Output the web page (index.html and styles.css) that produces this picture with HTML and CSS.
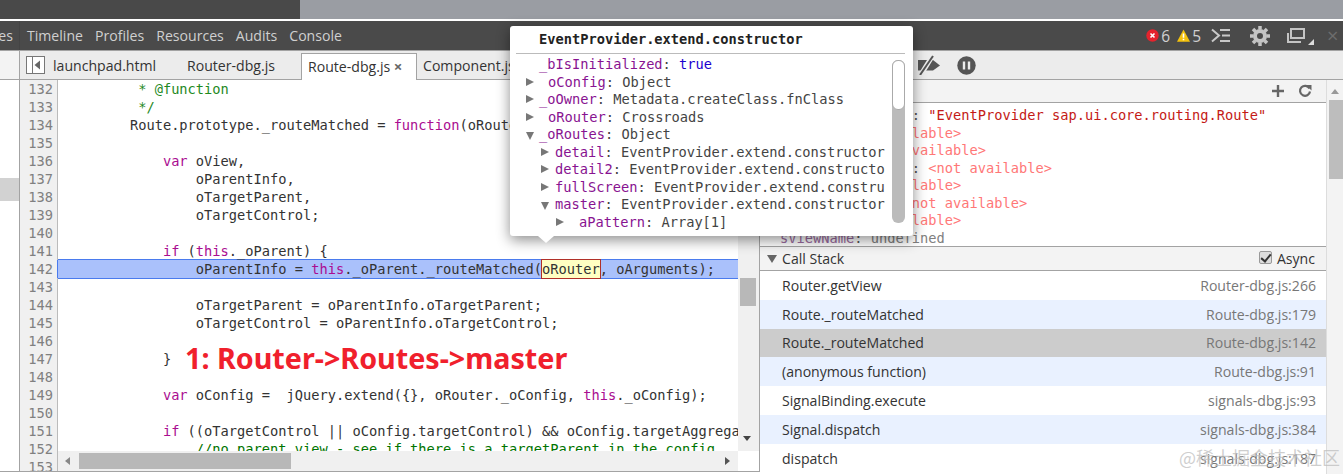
FILE: index.html
```html
<!DOCTYPE html>
<html>
<head>
  <meta charset="UTF-8">
  <title>Sources</title>
  <link rel="stylesheet" href="styles.css">
</head>
<body>
  <div class="topstrip">
    <div class="strip-dark"></div>
    <div class="strip-gray"></div>
  </div>

  <div class="toolbar">
    <div class="panel-tabs">
      <span class="cut-tab">es</span>
      <span class="panel-tab">Timeline</span>
      <span class="panel-tab">Profiles</span>
      <span class="panel-tab">Resources</span>
      <span class="panel-tab">Audits</span>
      <span class="panel-tab">Console</span>
    </div>
    <div class="status">
      <svg class="ico-err" width="13" height="13" viewBox="0 0 13 13"><circle cx="6.5" cy="6.5" r="6.2" fill="#e5232d"/><path d="M4.5 4.5l4 4M8.5 4.5l-4 4" stroke="#fff" stroke-width="1.6"/></svg>
      <span class="count">6</span>
      <svg class="ico-warn" width="13" height="13" viewBox="0 0 13 13"><path d="M6.5.5L13 12.8H0z" fill="#f4c20d"/><path d="M6.5 4.5v4.2M6.5 9.8v1.5" stroke="#fff" stroke-width="1.6"/></svg>
      <span class="count">5</span>
      <svg class="ico-drawer" width="19" height="15" viewBox="0 0 19 15" fill="none" stroke="#c8c8c8" stroke-width="2"><path d="M1 1.5L8 7.5 1 13.500"/><path d="M9 2h10M11 7.500h8M9 13h10"/></svg>
      <svg class="ico-gear" width="20" height="20" viewBox="0 0 20 20"><circle cx="10" cy="10" r="5" fill="none" stroke="#c4c4c4" stroke-width="4"/><path d="M10 0v20M0 10h20M3 3l14 14M17 3L3 17" stroke="#c4c4c4" stroke-width="3.500" stroke-dasharray="3.500 13"/></svg>
      <svg class="ico-dock" width="18" height="15" viewBox="0 0 18 15" fill="none" stroke="#c4c4c4" stroke-width="2"><rect x="4" y="1" width="13" height="9"/><path d="M1 5v9h13"/></svg>
      <svg class="ico-corner" width="6" height="6" viewBox="0 0 6 6"><path d="M6 0v6H0z" fill="#ddd"/></svg>
      <span class="close">×</span>
    </div>
  </div>

  <div class="filebar">
    <div class="filebar-side"></div>
    <svg class="ico-nav" width="19" height="18" viewBox="0 0 19 18"><rect x=".5" y=".5" width="18" height="17" fill="#fff" stroke="#777"/><path d="M6.500 1v16" stroke="#777"/><path d="M14 4.500v9L8.500 9z" fill="#666"/></svg>
    <span class="file file-launch">launchpad.html</span>
    <span class="file file-router">Router-dbg.js</span>
    <span class="file file-active">Route-dbg.js <i class="file-close">×</i></span>
    <span class="file file-comp">Component.js</span>
    <div class="debug-tools">
      <svg width="24" height="20" viewBox="0 0 24 20"><path d="M1 5h15l7 5.500-7 5H1z" fill="#555"/><path d="M3 21L16 0" stroke="#ececec" stroke-width="5"/><path d="M3 20L16 1" stroke="#555" stroke-width="2"/></svg>
      <svg width="19" height="19" viewBox="0 0 19 19"><circle cx="9.500" cy="9.500" r="9.200" fill="#555"/><path d="M7 5.500v8M12 5.500v8" stroke="#ececec" stroke-width="2.400"/></svg>
    </div>
  </div>

  <div class="main">
    <div class="source">
      <div class="navigator"><div class="nav-selected"></div></div>
      <div class="editor">
        <div class="line"><span class="num">132</span><code>         <span class="c">* @function</span></code></div>
        <div class="line"><span class="num">133</span><code>         <span class="c">*/</span></code></div>
        <div class="line"><span class="num">134</span><code>        Route.prototype._routeMatched = <span class="k">function</span>(oRouter, oArguments) {</code></div>
        <div class="line"><span class="num">135</span><code></code></div>
        <div class="line"><span class="num">136</span><code>            <span class="k">var</span> oView,</code></div>
        <div class="line"><span class="num">137</span><code>                oParentInfo,</code></div>
        <div class="line"><span class="num">138</span><code>                oTargetParent,</code></div>
        <div class="line"><span class="num">139</span><code>                oTargetControl;</code></div>
        <div class="line"><span class="num">140</span><code></code></div>
        <div class="line"><span class="num">141</span><code>            <span class="k">if</span> (<span class="k">this</span>._oParent) {</code></div>
        <div class="line line-exec"><span class="num">142</span><code>                oParentInfo = <span class="k">this</span>._oParent._routeMatched(<span class="hover-word">oRouter</span>, oArguments);</code></div>
        <div class="line"><span class="num">143</span><code></code></div>
        <div class="line"><span class="num">144</span><code>                oTargetParent = oParentInfo.oTargetParent;</code></div>
        <div class="line"><span class="num">145</span><code>                oTargetControl = oParentInfo.oTargetControl;</code></div>
        <div class="line"><span class="num">146</span><code></code></div>
        <div class="line"><span class="num">147</span><code>            }</code></div>
        <div class="line"><span class="num">148</span><code></code></div>
        <div class="line"><span class="num">149</span><code>            <span class="k">var</span> oConfig =  jQuery.extend({}, oRouter._oConfig, <span class="k">this</span>._oConfig);</code></div>
        <div class="line"><span class="num">150</span><code></code></div>
        <div class="line"><span class="num">151</span><code>            <span class="k">if</span> ((oTargetControl || oConfig.targetControl) &amp;&amp; oConfig.targetAggregation) {</code></div>
        <div class="line"><span class="num">152</span><code>                <span class="g">//no parent view - see if there is a targetParent in the config</span></code></div>
        <div class="line"><span class="num">153</span><code></code></div>
        <div class="hscroll">
          <span class="arrow-left"></span>
          <span class="hthumb"></span>
          <span class="arrow-right"></span>
        </div>
        <div class="note">1: Router-&gt;Routes-&gt;master</div>
      </div>
      <div class="vscroll">
        <span class="vthumb"></span>
        <span class="arrow-down"></span>
      </div>
    </div>

    <div class="sidebar">
      <div class="sidebar-body">
        <div class="watch-head">
          <svg width="14" height="14" viewBox="0 0 14 14"><path d="M7 1v12M1 7h12" stroke="#666" stroke-width="2.400"/></svg>
          <svg width="14" height="14" viewBox="0 0 14 14" fill="none"><path d="M11.500 4.500A5 5 0 1 0 12 7.500" stroke="#666" stroke-width="2.200"/><path d="M8 1h5.500v5.500z" fill="#666"/></svg>
        </div>
        <div class="scope">
          <div class="prop"><span class="key">_sMetadataName__</span>: <span class="str">"EventProvider sap.ui.core.routing.Route"</span></div>
          <div class="prop"><span class="key">oView</span>: <span class="na">&lt;not available&gt;</span></div>
          <div class="prop"><span class="key">oParent_</span>: <span class="na">&lt;not available&gt;</span></div>
          <div class="prop"><span class="key">oTargetControl__</span>: <span class="na">&lt;not available&gt;</span></div>
          <div class="prop"><span class="key">oView</span>: <span class="na">&lt;not available&gt;</span></div>
          <div class="prop"><span class="key">oTargetParent</span>: <span class="na">&lt;not available&gt;</span></div>
          <div class="prop"><span class="key">sPath</span>: <span class="na">&lt;not available&gt;</span></div>
          <div class="prop prop-dim"><span class="key">sViewName</span>: <span class="undef">undefined</span></div>
        </div>
        <div class="stack-head">
          <span class="tri-down"></span>
          <span class="stack-title">Call Stack</span>
          <label class="async"><span class="check"></span>Async</label>
        </div>
        <div class="frame"><span>Router.getView</span><span class="loc">Router-dbg.js:266</span></div>
        <div class="frame frame-alt"><span>Route._routeMatched</span><span class="loc">Route-dbg.js:179</span></div>
        <div class="frame frame-sel"><span>Route._routeMatched</span><span class="loc">Route-dbg.js:142</span></div>
        <div class="frame frame-alt"><span>(anonymous function)</span><span class="loc">Route-dbg.js:91</span></div>
        <div class="frame"><span>SignalBinding.execute</span><span class="loc">signals-dbg.js:93</span></div>
        <div class="frame frame-alt"><span>Signal.dispatch</span><span class="loc">signals-dbg.js:384</span></div>
        <div class="frame"><span>dispatch</span><span class="loc">signals-dbg.js:187</span></div>
      </div>
      <div class="side-scroll">
        <span class="arrow-up"></span>
        <span class="side-thumb"></span>
      </div>
    </div>
  </div>

  <div class="popover">
    <div class="pop-title">EventProvider.extend.constructor</div>
    <div class="pop-body">
      <div class="pop-rows">
        <div class="row row-0"><span class="key">_bIsInitialized</span>: <span class="bool">true</span></div>
        <div class="row row-1"><span class="tri"></span><span class="key">oConfig</span>: Object</div>
        <div class="row row-0b"><span class="tri"></span><span class="key">_oOwner</span>: Metadata.createClass.fnClass</div>
        <div class="row row-1"><span class="tri"></span><span class="key">oRouter</span>: Crossroads</div>
        <div class="row row-0b"><span class="tri tri-open"></span><span class="key">_oRoutes</span>: Object</div>
        <div class="row row-2"><span class="tri"></span><span class="key">detail</span>: EventProvider.extend.constructor</div>
        <div class="row row-2"><span class="tri"></span><span class="key">detail2</span>: EventProvider.extend.constructor</div>
        <div class="row row-2"><span class="tri"></span><span class="key">fullScreen</span>: EventProvider.extend.constructor</div>
        <div class="row row-2"><span class="tri tri-open"></span><span class="key">master</span>: EventProvider.extend.constructor</div>
        <div class="row row-3"><span class="tri"></span><span class="key">aPattern</span>: Array[1]</div>
      </div>
      <div class="pop-scroll"><span class="pop-thumb"></span></div>
    </div>
  </div>
  <div class="pop-arrow"></div>

  <div class="watermark">@稀土掘金技术社区</div>
</body>
</html>
```

FILE: styles.css
```css
* {
  box-sizing: border-box;
  margin: 0;
  padding: 0;
}
html, body {
  height: 474px;
  overflow: hidden;
}
body {
  position: relative;
  background: #fff;
  color: #333;
  font-family: "Open Sans", "Noto Sans", sans-serif;
  font-size: 14.1px;
}

.topstrip {
  display: flex;
  height: 19px;
}
.strip-dark {
  width: 300px;
  background: #494949;
}
.strip-gray {
  flex: 1;
  background: #9a9da3;
}

.toolbar {
  display: flex;
  justify-content: space-between;
  align-items: center;
  height: 30px;
  margin-top: 2px;
  background: #4a4a4a;
  border-bottom: 1px solid #a3a3a3;
  color: #d0d0d0;
}
.panel-tabs {
  display: flex;
  align-items: center;
  height: 100%;
}
.cut-tab {
  display: flex;
  align-items: center;
  justify-content: flex-end;
  align-self: stretch;
  width: 20px;
  margin-right: 7px;
  padding-right: 6px;
  border-right: 1px solid #444;
}
.panel-tab {
  margin-right: 12px;
}
.status {
  display: flex;
  align-items: center;
}
.count {
  margin-left: 2px;
  margin-right: 7px;
  font-size: 15.5px;
}
.ico-drawer {
  margin-left: 3px;
}
.ico-gear {
  margin-left: 20px;
}
.ico-dock {
  margin-left: 17px;
}
.ico-corner {
  margin-left: 3px;
  margin-top: 13px;
}
.close {
  margin-left: 13px;
  width: 16px;
  color: #6d6d6d;
  font-size: 20px;
  line-height: 20px;
}

.filebar {
  display: flex;
  align-items: flex-end;
  height: 29px;
  background: #ececec;
  border-bottom: 1px solid #a3a3a3;
}
.filebar-side {
  align-self: stretch;
  width: 20px;
  background: #f3f3f3;
  border-right: 1px solid #a3a3a3;
}
.ico-nav {
  margin: 0 8px 5px 6px;
}
.file {
  height: 26px;
  line-height: 25px;
  white-space: nowrap;
}
.file-launch {
  width: 134px;
}
.file-router {
  width: 114px;
}
.file-active {
  width: 116px;
  height: 27px;
  padding-left: 6px;
  margin-bottom: -1px;
  margin-right: 6px;
  background: #fff;
  border: 1px solid #a3a3a3;
  border-bottom: 0;
}
.file-close {
  color: #666;
  font-style: normal;
  font-weight: 700;
  font-size: 15px;
}
.file-comp {
  width: 90px;
}
.debug-tools {
  display: flex;
  align-items: center;
  gap: 16px;
  align-self: center;
  margin-left: 404px;
  flex-shrink: 0;
}

.main {
  display: flex;
  height: 394px;
}
.source {
  display: flex;
  width: 760px;
  height: 392px;
  border-bottom: 1px solid #a3a3a3;
  border-right: 1px solid #a3a3a3;
}
.navigator {
  width: 20px;
  padding-top: 98px;
  border-right: 1px solid #a3a3a3;
}
.nav-selected {
  height: 23px;
  background: #d2d2d2;
}
.editor {
  position: relative;
  z-index: 0;
  width: 718px;
  overflow: hidden;
  font-family: "DejaVu Sans Mono", monospace;
  font-size: 13.7px;
}
.line {
  position: relative;
  z-index: 1;
  display: flex;
  height: 18px;
  line-height: 18px;
  white-space: pre;
}
.num {
  flex: none;
  width: 38px;
  padding-right: 4px;
  text-align: right;
  color: #808080;
  background: #f0f0f0;
  border-right: 1px solid #bbb;
}
code {
  padding-left: 6px;
  font-family: inherit;
  color: #333;
}
.k {
  color: #aa0d91;
}
.c {
  color: #1f8a1f;
}
.g {
  color: #007400;
}
.line-exec {
  z-index: 0;
}
.line-exec code {
  flex: 1;
  background: #aac1fb;
  box-shadow: 0 0 0 1px #4a7bee;
}
.hover-word {
  display: inline-block;
  height: 20px;
  margin: -1px;
  border: 1px solid #b03028;
  background: #ffffc2;
  line-height: 18px;
}
.hscroll {
  position: absolute;
  z-index: 2;
  left: 38px;
  right: 0;
  top: 371px;
  height: 20px;
  background: #f0f0f0;
}
.hthumb {
  position: absolute;
  left: 21px;
  top: 2px;
  width: 212px;
  height: 16px;
  background: #b8b8b8;
}
.arrow-left, .arrow-right {
  position: absolute;
  top: 6px;
  border-top: 4px solid transparent;
  border-bottom: 4px solid transparent;
}
.arrow-left {
  left: 7px;
  border-right: 5px solid #888;
}
.arrow-right {
  right: 8px;
  border-left: 5px solid #555;
}
.note {
  position: absolute;
  z-index: 2;
  left: 165px;
  top: 258px;
  color: #f0202c;
  font-family: "Noto Sans", sans-serif;
  font-size: 28.7px;
  font-weight: 700;
  line-height: 40px;
  white-space: nowrap;
}
.vscroll {
  position: relative;
  flex: 1;
  height: 371px;
  background: #f0f0f0;
}
.vthumb {
  position: absolute;
  left: 2px;
  top: 198px;
  width: 16px;
  height: 28px;
  background: #b8b8b8;
}
.arrow-down {
  position: absolute;
  left: 5px;
  top: 356px;
  border-left: 4px solid transparent;
  border-right: 4px solid transparent;
  border-top: 5px solid #444;
}

.sidebar {
  display: flex;
  flex: 1;
  min-width: 0;
}
.sidebar-body {
  width: 567px;
  border-right: 1px solid #ddd;
}
.watch-head {
  display: flex;
  justify-content: flex-end;
  align-items: center;
  gap: 13px;
  height: 23px;
  padding-right: 14px;
  background: #f3f3f3;
  border-bottom: 1px solid #a3a3a3;
}
.scope {
  height: 144px;
  padding-top: 4px;
  overflow: hidden;
  font-family: "DejaVu Sans Mono", monospace;
  font-size: 13.7px;
  border-bottom: 1px solid #a3a3a3;
}
.prop {
  height: 17.5px;
  line-height: 17.5px;
  padding-left: 20px;
  color: #555;
  white-space: pre;
}
.key {
  color: #881391;
}
.prop-dim .key {
  color: #9a6aa0;
}
.str {
  color: #c41a16;
}
.na {
  color: #f77;
}
.undef {
  color: #808080;
}
.stack-head {
  display: flex;
  align-items: center;
  height: 24px;
  padding-left: 7px;
  padding-right: 11px;
  background: #f3f3f3;
  border-bottom: 1px solid #a3a3a3;
}
.tri-down {
  width: 0;
  height: 0;
  border-left: 5px solid transparent;
  border-right: 5px solid transparent;
  border-top: 8px solid #666;
}
.stack-title {
  flex: 1;
  margin-left: 5px;
}
.async {
  display: flex;
  align-items: center;
}
.check {
  position: relative;
  width: 13px;
  height: 13px;
  margin-right: 5px;
  margin-top: -3px;
  background: #ddd;
  border: 1px solid #999;
  border-radius: 2px;
}
.check::after {
  content: "";
  position: absolute;
  left: 3px;
  top: 0;
  width: 4px;
  height: 8px;
  border: solid #333;
  border-width: 0 2px 2px 0;
  transform: rotate(40deg);
}
.frame {
  display: flex;
  justify-content: space-between;
  align-items: center;
  height: 28.8px;
  padding: 0 10px 0 22px;
}
.frame-alt {
  background: #e9f1ff;
}
.frame-sel {
  background: #cccccc;
}
.loc {
  color: #777;
}
.side-scroll {
  position: relative;
  flex: 1;
  height: 100%;
  background: #f3f3f3;
}
.arrow-up {
  position: absolute;
  left: 4px;
  top: 9px;
  border-left: 4px solid transparent;
  border-right: 4px solid transparent;
  border-bottom: 5px solid #999;
}
.side-thumb {
  position: absolute;
  left: 2px;
  top: 20px;
  right: 0;
  height: 79px;
  background: #bdbdbd;
}

.popover {
  position: absolute;
  z-index: 5;
  left: 510px;
  top: 26px;
  width: 403px;
  height: 210px;
  padding: 0 8px 0 6px;
  background: #fff;
  border-radius: 3px;
  box-shadow: 0 4px 14px rgba(0, 0, 0, .45);
  font-family: "DejaVu Sans Mono", monospace;
  font-size: 13.7px;
}
.pop-arrow {
  position: absolute;
  z-index: 5;
  left: 538px;
  top: 236px;
  border-left: 8px solid transparent;
  border-right: 8px solid transparent;
  border-top: 7px solid #fff;
}
.pop-title {
  height: 28px;
  padding-left: 23px;
  line-height: 26px;
  color: #222;
  font-weight: 700;
  border-bottom: 1px solid #bbb;
}
.pop-body {
  display: flex;
  gap: 7px;
  padding-top: 2px;
}
.pop-rows {
  width: 369px;
  overflow: hidden;
  color: #444;
}
.row {
  position: relative;
  height: 17.5px;
  line-height: 17.5px;
  white-space: pre;
}
.row-0, .row-0b {
  padding-left: 23px;
}
.row-1 {
  padding-left: 32px;
}
.row-2 {
  padding-left: 39px;
}
.row-3 {
  padding-left: 63px;
}
.tri {
  position: absolute;
  top: 4px;
  border-top: 4.500px solid transparent;
  border-bottom: 4.500px solid transparent;
  border-left: 8px solid #777;
}
.row-1 .tri, .row-0b .tri {
  left: 10px;
}
.row-2 .tri {
  left: 25px;
}
.row-3 .tri {
  left: 40px;
}
.row .tri-open {
  top: 6px;
  border-left: 4.500px solid transparent;
  border-right: 4.500px solid transparent;
  border-top: 8px solid #777;
  border-bottom: 0;
}
.bool {
  color: #1c00cf;
}
.pop-scroll {
  width: 13px;
  height: 163px;
  margin-top: 4px;
  background: #bbb;
  border-radius: 6px;
}
.pop-thumb {
  display: block;
  height: 50px;
  background: #fff;
  border: 1px solid #aaa;
  border-radius: 6px;
}

.watermark {
  position: absolute;
  z-index: 5;
  right: 3px;
  top: 445px;
  color: rgba(190, 190, 190, .75);
  font-family: "Noto Sans CJK SC", sans-serif;
  font-size: 18px;
  line-height: 24px;
  white-space: nowrap;
}
```
